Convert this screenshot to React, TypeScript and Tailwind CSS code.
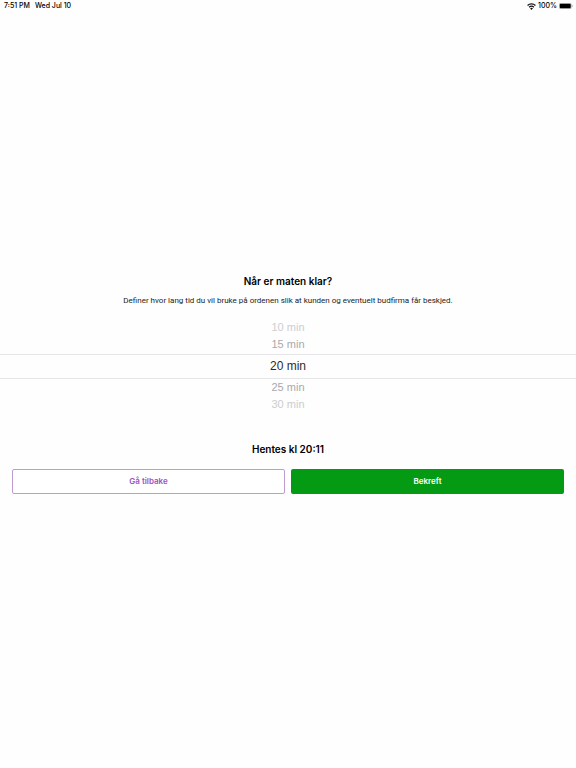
import { useState } from "react";

const times = [10, 15, 20, 25, 30];

const rowStyles = [
  "h-4 text-[11px] text-[#cdcdcf]",
  "h-[18px] text-[11px] text-[#a9a9ac]",
  "h-[25px] border-y border-[#e6e6e8] text-xs text-[#2c2c2e]",
  "h-[18px] text-[11px] text-[#a9a9ac]",
  "h-4 text-[11px] text-[#cdcdcf]",
];

function WifiIcon() {
  return (
    <svg viewBox="0 0 16 12" className="h-[7px] w-[9px]" fill="none" stroke="#111" strokeWidth="2.3" aria-hidden="true">
      <path d="M1 4.3a10 10 0 0 1 14 0" />
      <path d="M3.8 7.3a6 6 0 0 1 8.4 0" />
      <path d="M8 12 5.5 9.4a3.7 3.7 0 0 1 5 0Z" fill="#111" stroke="none" />
    </svg>
  );
}

function BatteryIcon() {
  return (
    <svg viewBox="0 0 28 12" className="h-[6px] w-[14px]" aria-hidden="true">
      <rect x="0.5" y="0.5" width="24" height="11" rx="3" fill="none" stroke="#777" />
      <rect x="1.5" y="1.5" width="22" height="9" rx="2" fill="#000" />
      <path d="M26 4c1.5.6 1.5 3.4 0 4Z" fill="#777" />
    </svg>
  );
}

export default function App() {
  const [selected, setSelected] = useState(20);

  return (
    <div className="flex min-h-screen flex-col bg-[#fefefe] font-['Inter','Liberation_Sans',sans-serif] text-black">
      <header className="flex h-3 items-center justify-between pl-1 pr-[3px] text-[7px] leading-3 font-medium">
        <div className="flex gap-[5px]">
          <span>7:51 PM</span>
          <span>Wed Jul 10</span>
        </div>
        <div className="flex items-center gap-[2px]">
          <WifiIcon />
          <span>100%</span>
          <BatteryIcon />
        </div>
      </header>

      <main className="flex flex-1 flex-col justify-center pb-[14px] text-center">
        <h1 className="text-[10px] leading-4 font-semibold">Når er maten klar?</h1>
        <p className="mt-1 font-['Roboto',sans-serif] text-[8px] leading-4 text-[#1c1c1e]">
          Definer hvor lang tid du vil bruke på ordenen slik at kunden og eventuelt budfirma får beskjed.
        </p>

        <div
          role="listbox"
          aria-label="Tid til maten er klar"
          className="mt-[11px] flex flex-col font-['Liberation_Sans',sans-serif]"
        >
          {times.map((time, i) => (
            <button
              key={time}
              type="button"
              role="option"
              aria-selected={time === selected}
              onClick={() => setSelected(time)}
              className={`flex items-center justify-center ${rowStyles[i]}`}
            >
              {time} min
            </button>
          ))}
        </div>

        <p className="mt-7 text-[10px] leading-4 font-semibold">Hentes kl 20:11</p>

        <div className="mt-3 grid grid-cols-2 gap-[6px] px-3 text-[8px] font-semibold">
          <button type="button" className="h-[25px] rounded-xs border border-[#bf9bd0] bg-white text-[#a04fc4]">
            Gå tilbake
          </button>
          <button type="button" className="h-[25px] rounded-xs bg-[#049a14] text-white">
            Bekreft
          </button>
        </div>
      </main>
    </div>
  );
}
